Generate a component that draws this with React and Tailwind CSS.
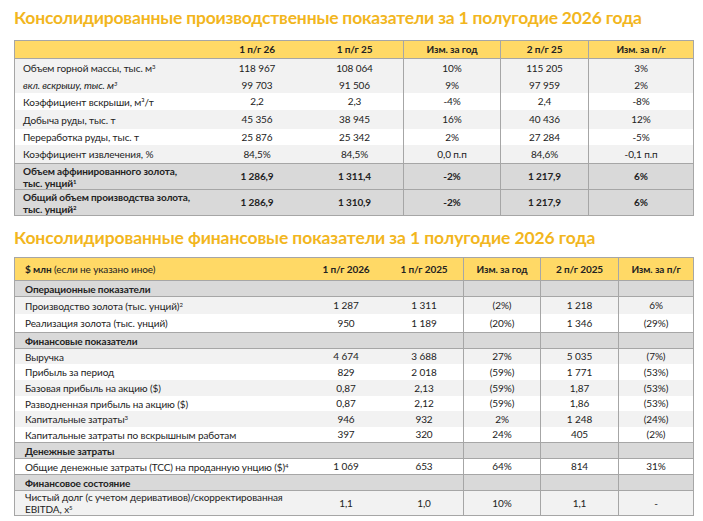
import React from 'react';

const font = { fontFamily: 'Lato, "Open Sans", sans-serif' };

// производственные показатели
const prodCols = ['w-[193px]', 'w-[98px]', 'w-[97px]', 'w-[97px]', 'w-[88px]', 'w-[105px]'];
const prodHead = ['', '1 п/г 26', '1 п/г 25', 'Изм. за год', '2 п/г 25', 'Изм. за п/г'];
const prodRows = [
  { label: 'Объем горной массы, тыс. м', sup: '3', vals: ['118 967', '108 064', '10%', '115 205', '3%'], bg: 'bg-[#f2f2f2]', h: 'h-[19px]', top: true },
  { label: 'вкл. вскрышу, тыс. м', sup: '3', italic: true, vals: ['99 703', '91 506', '9%', '97 959', '2%'], bg: 'bg-[#f2f2f2]', h: 'h-[16px]' },
  { label: 'Коэффициент вскрыши, м³/т', vals: ['2,2', '2,3', '-4%', '2,4', '-8%'], bg: 'bg-white', h: 'h-[17px]' },
  { label: 'Добыча руды, тыс. т', vals: ['45 356', '38 945', '16%', '40 436', '12%'], bg: 'bg-[#f2f2f2]', h: 'h-[19px]' },
  { label: 'Переработка руды, тыс. т', vals: ['25 876', '25 342', '2%', '27 284', '-5%'], bg: 'bg-white', h: 'h-[16px]' },
  { label: 'Коэффициент извлечения, %', vals: ['84,5%', '84,5%', '0,0 п.п', '84,6%', '-0,1 п.п'], bg: 'bg-[#f2f2f2]', h: 'h-[18px]' },
  { label: 'Объем аффинированного золота,', label2: 'тыс. унций', sup: '1', bold: true, vals: ['1 286,9', '1 311,4', '-2%', '1 217,9', '6%'], bg: 'bg-[#d9d9d9]', h: 'h-[26px]', top: true },
  { label: 'Общий объем производства золота,', label2: 'тыс. унций', sup: '2', bold: true, vals: ['1 286,9', '1 310,9', '-2%', '1 217,9', '6%'], bg: 'bg-[#d9d9d9]', h: 'h-[26px]', top: true },
];

// финансовые показатели
const finCols = ['w-[292px]', 'w-[78px]', 'w-[78px]', 'w-[77px]', 'w-[78px]', 'w-[75px]'];
const finHead = ['1 п/г 2026', '1 п/г 2025', 'Изм. за год', '2 п/г 2025', 'Изм. за п/г'];
const finRows = [
  { label: 'Операционные показатели', section: true, h: 'h-[16px]', top: true },
  { label: 'Производство золота (тыс. унций)', sup: '2', vals: ['1 287', '1 311', '(2%)', '1 218', '6%'], bg: 'bg-[#f2f2f2]', h: 'h-[18px]', top: true },
  { label: 'Реализация золота (тыс. унций)', vals: ['950', '1 189', '(20%)', '1 346', '(29%)'], bg: 'bg-white', h: 'h-[18px]' },
  { label: 'Финансовые показатели', section: true, h: 'h-[16px]', top: true },
  { label: 'Выручка', vals: ['4 674', '3 688', '27%', '5 035', '(7%)'], bg: 'bg-[#f2f2f2]', h: 'h-[16px]', top: true },
  { label: 'Прибыль за период', vals: ['829', '2 018', '(59%)', '1 771', '(53%)'], bg: 'bg-white', h: 'h-[16px]' },
  { label: 'Базовая прибыль на акцию ($)', vals: ['0,87', '2,13', '(59%)', '1,87', '(53%)'], bg: 'bg-[#f2f2f2]', h: 'h-[16px]' },
  { label: 'Разводненная прибыль на акцию ($)', vals: ['0,87', '2,12', '(59%)', '1,86', '(53%)'], bg: 'bg-white', h: 'h-[15px]' },
  { label: 'Капитальные затраты', sup: '3', vals: ['946', '932', '2%', '1 248', '(24%)'], bg: 'bg-[#f2f2f2]', h: 'h-[16px]' },
  { label: 'Капитальные затраты по вскрышным работам', vals: ['397', '320', '24%', '405', '(2%)'], bg: 'bg-white', h: 'h-[15px]' },
  { label: 'Денежные затраты', section: true, h: 'h-[16px]', top: true },
  { label: 'Общие денежные затраты (TCC) на проданную унцию ($)', sup: '4', vals: ['1 069', '653', '64%', '814', '31%'], bg: 'bg-white', h: 'h-[16px]', top: true },
  { label: 'Финансовое состояние', section: true, h: 'h-[16px]', top: true },
  { label: 'Чистый долг (с учетом деривативов)/скорректированная', label2: 'EBITDA, x', sup: '5', vals: ['1,1', '1,0', '10%', '1,1', '-'], bg: 'bg-[#f2f2f2]', h: 'h-[25px]', top: true },
];

function Cell({ w, i, children, className = '' }) {
  return (
    <div className={`${w} shrink-0 h-full flex items-center ${i >= 3 ? 'border-l border-[#a6a6a6]' : ''} ${className}`}>
      {children}
    </div>
  );
}

function Label({ row }) {
  return (
    <span className={`leading-[12px] whitespace-nowrap ${row.italic ? 'italic' : ''} ${row.bold || row.section ? 'font-bold' : ''}`}>
      {row.label}
      {row.label2 && <br />}
      {row.label2}
      {row.sup && <sup className="text-[6px]">{row.sup}</sup>}
    </span>
  );
}

function ProdTable() {
  return (
    <div className="w-[680px] border border-[#a6a6a6] text-[10px] tracking-[-0.1px] text-[#222]">
      <div className="flex h-[17px] bg-[#ffd966] font-bold">
        {prodHead.map((t, i) => (
          <Cell key={i} w={prodCols[i]} i={i} className="justify-center">{t}</Cell>
        ))}
      </div>
      {prodRows.map((row, r) => (
        <div key={r} className={`flex ${row.h} ${row.bg} ${row.top ? 'border-t border-[#a6a6a6]' : ''} ${row.bold ? 'font-bold' : ''}`}>
          <Cell w={prodCols[0]} i={0} className="pl-[8px]"><Label row={row} /></Cell>
          {row.vals.map((v, i) => (
            <Cell key={i} w={prodCols[i + 1]} i={i + 1} className="justify-center">{v}</Cell>
          ))}
        </div>
      ))}
    </div>
  );
}

function FinTable() {
  return (
    <div className="w-[680px] border border-[#a6a6a6] text-[10px] tracking-[-0.1px] text-[#222]">
      <div className="flex h-[22px] bg-[#ffd966]">
        <Cell w={finCols[0]} i={0} className="pl-[10px]">
          <span><b>$ млн</b> (если не указано иное)</span>
        </Cell>
        {finHead.map((t, i) => (
          <Cell key={i} w={finCols[i + 1]} i={i + 1} className="justify-center font-bold">{t}</Cell>
        ))}
      </div>
      {finRows.map((row, r) => (
        <div key={r} className={`flex ${row.h} ${row.section ? 'bg-[#d9d9d9]' : row.bg} ${row.top ? 'border-t border-[#a6a6a6]' : ''}`}>
          <Cell w={finCols[0]} i={0} className="pl-[10px]"><Label row={row} /></Cell>
          {[0, 1, 2, 3, 4].map((i) => (
            <Cell key={i} w={finCols[i + 1]} i={i + 1} className="justify-center">{row.vals ? row.vals[i] : ''}</Cell>
          ))}
        </div>
      ))}
    </div>
  );
}

export default function App() {
  return (
    <div className="w-[703px] h-[521px] bg-white px-[14px] pt-[5px] overflow-hidden" style={font}>
      <h1 className="h-[26px] leading-[26px] text-[17.5px] tracking-[-0.2px] font-bold text-[#f2b61e] whitespace-nowrap mb-[9px]">
        Консолидированные производственные показатели за 1 полугодие 2026 года
      </h1>
      <ProdTable />
      <h2 className="h-[24px] leading-[24px] text-[17.5px] tracking-[-0.1px] font-bold text-[#f2b61e] whitespace-nowrap mt-[10px] mb-[7px]">
        Консолидированные финансовые показатели за 1 полугодие 2026 года
      </h2>
      <FinTable />
    </div>
  );
}
